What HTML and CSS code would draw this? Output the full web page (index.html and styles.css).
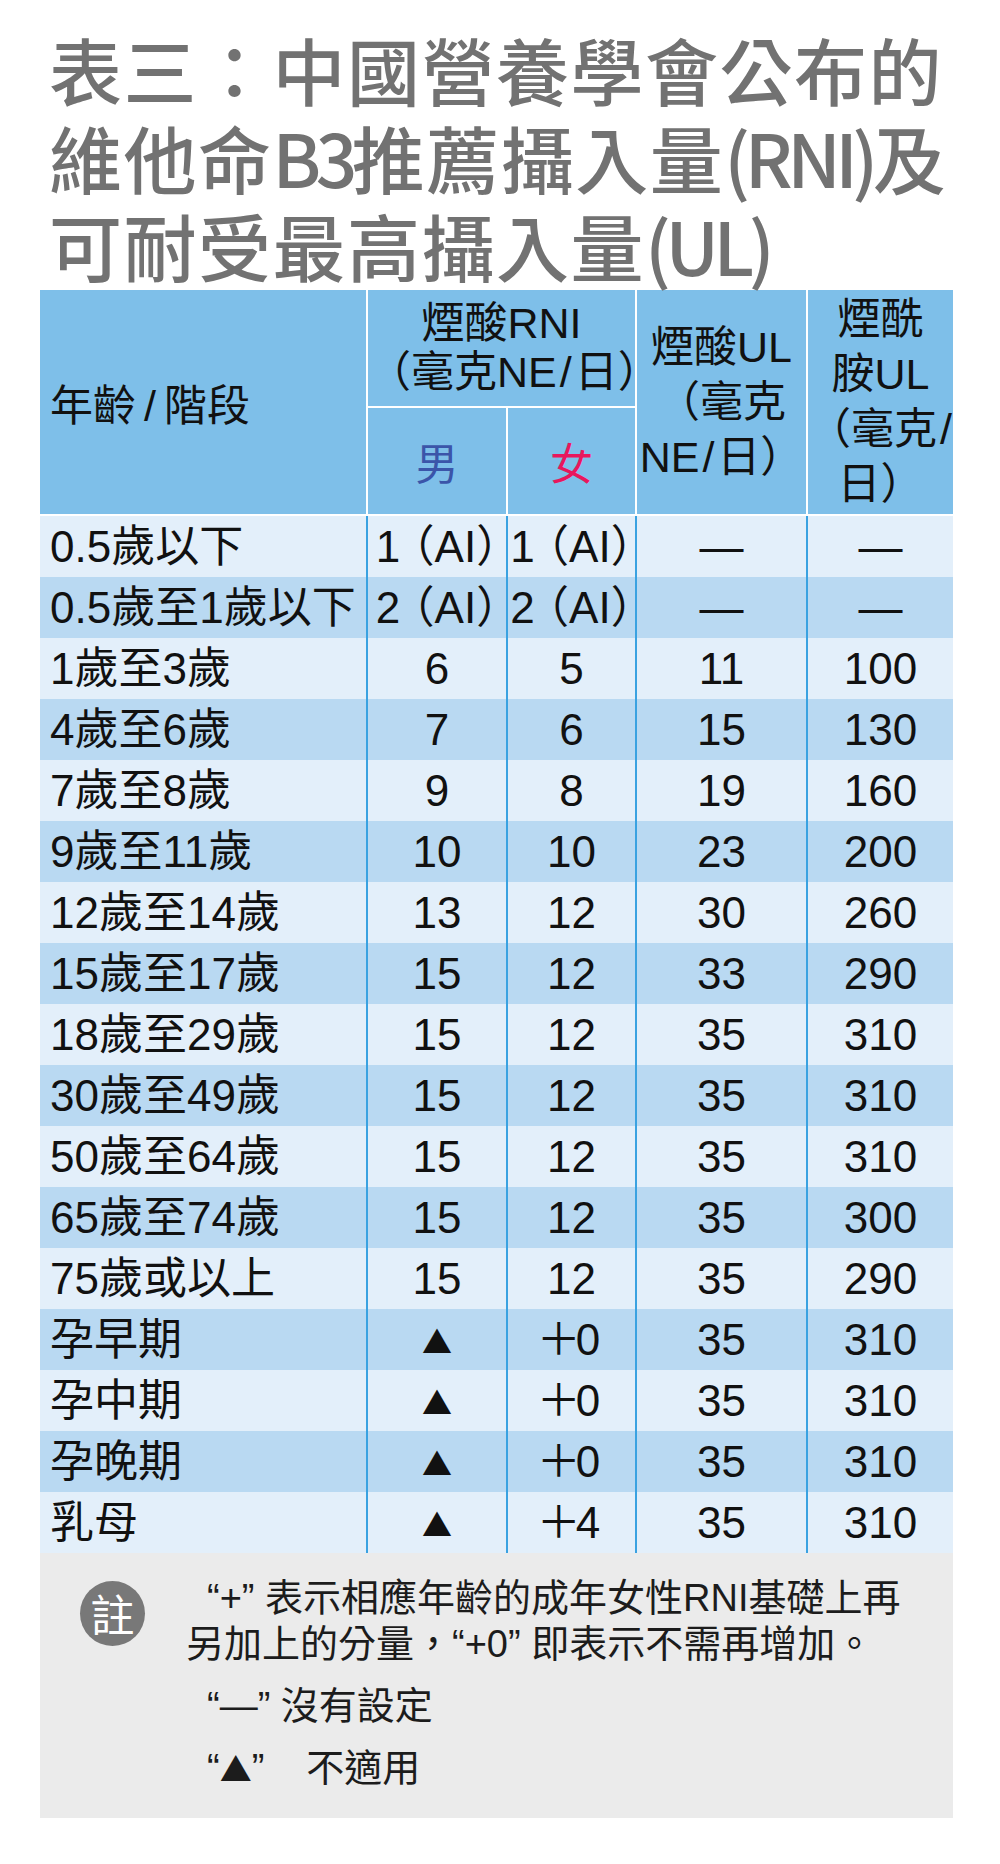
FILE: index.html
```html
<!DOCTYPE html>
<html lang="zh-Hant">
<head>
<meta charset="utf-8">
<title>表三：維他命B3推薦攝入量</title>
<link rel="stylesheet" href="styles.css">
</head>
<body>
<div class="page">
  <h1 class="title">
    <span class="tl">表三：中國營養學會公布的</span>
    <span class="tl">維他命<span class="lat">B3</span>推薦攝入量<span class="lat">(RNI)</span>及</span>
    <span class="tl">可耐受最高攝入量<span class="lat">(UL)</span></span>
  </h1>
  <table class="nut">
    <colgroup>
      <col class="c1"><col class="c2"><col class="c3"><col class="c4"><col class="c5">
    </colgroup>
    <thead>
      <tr class="h1r">
        <th rowspan="2" class="age">年齡<span class="sl">/</span>階段</th>
        <th colspan="2" class="grp">煙酸RNI<br>（毫克NE<span class="sl">/</span>日）</th>
        <th rowspan="2" class="tall">煙酸UL<br>（毫克<br>NE<span class="sl">/</span>日）</th>
        <th rowspan="2" class="tall">煙酰<br>胺UL<br>（毫克<span class="sl">/</span><br>日）</th>
      </tr>
      <tr class="h2r">
        <th class="male">男</th>
        <th class="female">女</th>
      </tr>
    </thead>
    <tbody>
      <tr><td>0.5歲以下</td><td class="ai">1 （AI）</td><td class="ai">1 （AI）</td><td>—</td><td>—</td></tr>
      <tr><td>0.5歲至1歲以下</td><td class="ai">2 （AI）</td><td class="ai">2 （AI）</td><td>—</td><td>—</td></tr>
      <tr><td>1歲至3歲</td><td>6</td><td>5</td><td>11</td><td>100</td></tr>
      <tr><td>4歲至6歲</td><td>7</td><td>6</td><td>15</td><td>130</td></tr>
      <tr><td>7歲至8歲</td><td>9</td><td>8</td><td>19</td><td>160</td></tr>
      <tr><td>9歲至11歲</td><td>10</td><td>10</td><td>23</td><td>200</td></tr>
      <tr><td>12歲至14歲</td><td>13</td><td>12</td><td>30</td><td>260</td></tr>
      <tr><td>15歲至17歲</td><td>15</td><td>12</td><td>33</td><td>290</td></tr>
      <tr><td>18歲至29歲</td><td>15</td><td>12</td><td>35</td><td>310</td></tr>
      <tr><td>30歲至49歲</td><td>15</td><td>12</td><td>35</td><td>310</td></tr>
      <tr><td>50歲至64歲</td><td>15</td><td>12</td><td>35</td><td>310</td></tr>
      <tr><td>65歲至74歲</td><td>15</td><td>12</td><td>35</td><td>300</td></tr>
      <tr><td>75歲或以上</td><td>15</td><td>12</td><td>35</td><td>290</td></tr>
      <tr><td>孕早期</td><td><span class="tri">▲</span></td><td><span class="plus">＋</span>0</td><td>35</td><td>310</td></tr>
      <tr><td>孕中期</td><td><span class="tri">▲</span></td><td><span class="plus">＋</span>0</td><td>35</td><td>310</td></tr>
      <tr><td>孕晚期</td><td><span class="tri">▲</span></td><td><span class="plus">＋</span>0</td><td>35</td><td>310</td></tr>
      <tr><td>乳母</td><td><span class="tri">▲</span></td><td><span class="plus">＋</span>4</td><td>35</td><td>310</td></tr>
    </tbody>
  </table>
  <div class="notes">
    <div class="badge">註</div>
    <div class="ntext">
      <p class="n1">“+” 表示相應年齡的成年女性RNI基礎上再<br>另加上的分量，“+0” 即表示不需再增加。</p>
      <p>“—” 沒有設定</p>
      <p>“<span class="ntri">▲</span>”<span class="gap">不適用</span></p>
    </div>
  </div>
</div>
</body>
</html>
```
FILE: styles.css
```css
* {
  box-sizing: border-box;
}

body {
  margin: 0;
  background: #ffffff;
  font-family: "Liberation Sans", "Noto Sans CJK TC", sans-serif;
  color: #111111;
}

.page {
  width: 1000px;
  padding: 24px 47px 0 40px;
}

.title {
  margin: 0 0 2px;
  padding-left: 9px;
  font-family: "Noto Sans CJK TC", sans-serif;
  font-size: 73px;
  line-height: 88px;
  font-weight: 500;
  letter-spacing: 1.5px;
  color: #727272;
}

.tl {
  display: block;
  white-space: nowrap;
}

.lat {
  letter-spacing: -5.5px;
}

.nut {
  width: 913px;
  border-collapse: collapse;
  table-layout: fixed;
}

.c1 { width: 327px; }
.c2 { width: 140px; }
.c3 { width: 129px; }
.c4 { width: 171px; }
.c5 { width: 146px; }

.nut th {
  background: #7ebfe9;
  color: #111111;
  font-weight: 400;
  font-size: 43px;
  padding: 0;
  text-align: center;
  white-space: nowrap;
  border-left: 2px solid #ffffff;
  border-bottom: 2px solid #ffffff;
}

.nut th.age {
  border-left: 0;
  text-align: left;
  padding-left: 10px;
}

.sl {
  margin: 0 3px;
}

.age .sl {
  margin: 0 8px;
}

.h1r { height: 117px; }
.h2r { height: 108px; }

.grp {
  line-height: 49px;
}

.tall {
  line-height: 55px;
}

.nut th.male { color: #3b55a9; }
.nut th.female { color: #e8175d; }

.nut td {
  height: 61px;
  padding: 0;
  font-size: 44px;
  line-height: 61px;
  text-align: center;
  white-space: nowrap;
  border-left: 2px solid #3aa2e1;
}

.nut td:first-child {
  border-left: 0;
  text-align: left;
  padding-left: 10px;
}

.nut tbody tr:nth-child(odd) { background: #e3effa; }
.nut tbody tr:nth-child(even) { background: #b9d9f2; }

.ai {
  font-feature-settings: "halt";
}

.tri {
  font-family: "Noto Sans CJK TC", sans-serif;
  font-size: 30px;
  line-height: 0;
  vertical-align: 2px;
}

.plus {
  font-family: "Noto Sans CJK TC", sans-serif;
  line-height: 0;
  margin-left: -6px;
  letter-spacing: -5px;
}

.notes {
  width: 913px;
  background: #ebebeb;
  display: flex;
  align-items: flex-start;
  gap: 41px;
  padding: 22px 20px 27px 40px;
}

.badge {
  flex: none;
  width: 65px;
  height: 65px;
  margin-top: 6px;
  border-radius: 50%;
  background: #787878;
  color: #ffffff;
  font-family: "Noto Sans CJK TC", sans-serif;
  font-size: 44px;
  line-height: 65px;
  text-align: center;
}

.ntext {
  font-size: 38px;
  line-height: 46px;
  color: #1c1c1c;
  white-space: nowrap;
}

.ntext p {
  margin: 0;
  text-indent: 21px;
}

.ntext p + p {
  margin-top: 16px;
}

.ntri {
  font-family: "Noto Sans CJK TC", sans-serif;
  font-size: 32px;
  line-height: 0;
}

.gap {
  margin-left: 42px;
}
```
